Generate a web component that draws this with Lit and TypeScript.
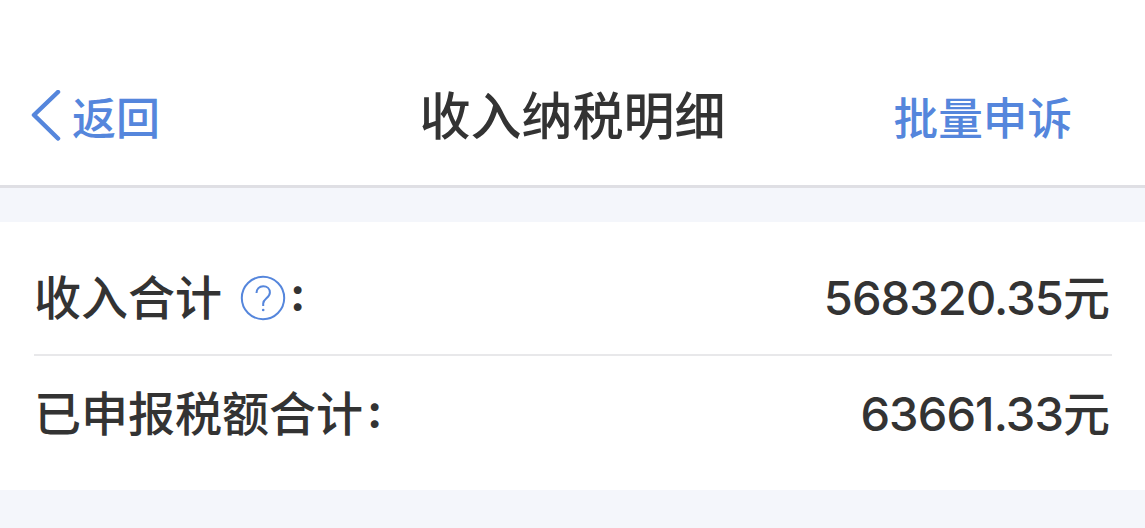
import { LitElement, html, css } from "lit";
import { customElement } from "lit/decorators.js";

interface TotalRow {
  label: string;
  amount: string;
  help?: boolean;
}

@customElement("app-root")
export class AppRoot extends LitElement {
  static styles = css`
    :host {
      display: flex;
      flex-direction: column;
      box-sizing: border-box;
      height: 528px;
      overflow: hidden;
      background: #f4f6fb;
      color: #333333;
      font-family: Inter, "Noto Sans CJK SC", sans-serif;
      font-weight: 500;
      white-space: nowrap;
    }

    .navbar {
      display: grid;
      grid-template-columns: 1fr auto 1fr;
      align-items: center;
      box-sizing: border-box;
      height: 188px;
      padding: 46px 31px 0;
      background: #ffffff;
      border-bottom: 3px solid #dfdfe4;
    }

    .back,
    .action {
      display: flex;
      align-items: center;
      color: #5586dc;
      font-size: 44px;
      line-height: 60px;
    }

    .back {
      gap: 10px;
    }

    .back span,
    .action {
      padding-top: 6px;
    }

    .action {
      justify-content: flex-end;
      padding-right: 42px;
      font-size: 44.6px;
    }

    .title {
      padding-top: 2px;
      font-size: 51px;
      line-height: 60px;
    }

    .totals {
      box-sizing: border-box;
      height: 268px;
      margin-top: 34px;
      padding: 17px 33px 0 34px;
      background: #ffffff;
    }

    .row {
      display: flex;
      align-items: center;
      justify-content: space-between;
      box-sizing: border-box;
      height: 115px;
      padding-top: 2px;
      font-size: 47px;
      line-height: 60px;
    }

    .row + .row {
      height: 118px;
      padding-top: 0;
      border-top: 2px solid #e8e8ea;
    }

    .label {
      display: flex;
      align-items: center;
    }

    .help {
      margin-left: 18px;
    }

    .colon {
      margin-top: -7px;
      padding-left: 4px;
      font-size: 46px;
      font-weight: 700;
    }

    .amount {
      padding-right: 2px;
    }

    .number {
      letter-spacing: -0.9px;
    }
  `;

  private rows: TotalRow[] = [
    { label: "收入合计", amount: "568320.35", help: true },
    { label: "已申报税额合计", amount: "63661.33" },
  ];

  renderHelp() {
    return html`<svg class="help" width="46" height="46" viewBox="0 0 46 46" fill="none" stroke="#5586dc">
      <circle cx="23" cy="23" r="21.2" stroke-width="2" />
      <path
        d="M16.500 18c0-4 2.800-6.800 6.700-6.800s6.700 2.600 6.700 6.300c0 5.500-6.700 6-6.700 11v2.500"
        stroke-width="2"
      />
      <circle cx="23.200" cy="35" r="1.300" fill="#5586dc" stroke="none" />
    </svg>`;
  }

  render() {
    return html`
      <header class="navbar">
        <div class="back">
          <svg
            width="31"
            height="52"
            viewBox="0 0 31 52"
            fill="none"
            stroke="#5586dc"
            stroke-width="4.500"
            stroke-linecap="round"
            stroke-linejoin="round"
          >
            <path d="M27 2L3 25L27 48.500" />
          </svg>
          <span>返回</span>
        </div>
        <div class="title">收入纳税明细</div>
        <div class="action">批量申诉</div>
      </header>
      <main class="totals">
        ${this.rows.map(
          (row) => html`<div class="row">
            <div class="label">
              <span>${row.label}</span>${row.help ? this.renderHelp() : ""}<span class="colon">:</span>
            </div>
            <div class="amount"><span class="number">${row.amount}</span>元</div>
          </div>`,
        )}
      </main>
    `;
  }
}
